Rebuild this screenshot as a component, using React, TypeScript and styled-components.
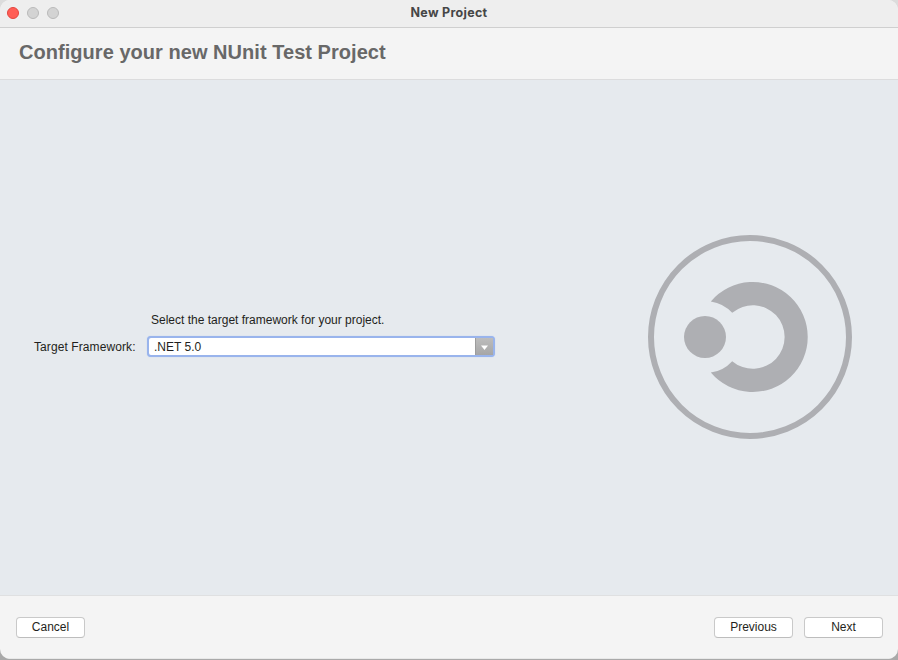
import React from "react";
import styled, { createGlobalStyle } from "styled-components";

const GlobalStyle = createGlobalStyle`
  *, *::before, *::after { box-sizing: border-box; }
  body {
    margin: 0;
    min-height: 100vh;
    background: linear-gradient(#dcdcdc 50%, #a9a9a9 50%);
    overflow: hidden;
  }
`;

const Window = styled.div`
  width: 898px;
  height: 659px;
  display: flex;
  flex-direction: column;
  border-radius: 10px;
  overflow: hidden;
  background: #f4f4f4;
  font-family: "Liberation Sans", Arial, sans-serif;
  font-size: 12px;
  color: #1f1f20;
`;

const TitleBar = styled.header`
  height: 28px;
  flex: none;
  display: grid;
  grid-template-columns: 1fr auto 1fr;
  align-items: center;
  padding: 0 7px 2px;
  background: #eeeeee;
  border-bottom: 1px solid #cfcfcf;
`;

const Lights = styled.div`
  display: flex;
  gap: 8px;
`;

const Light = styled.span<{ $fill: string; $edge: string }>`
  width: 12px;
  height: 12px;
  border-radius: 50%;
  background: ${(p) => p.$fill};
  border: 1px solid ${(p) => p.$edge};
`;

const Title = styled.div`
  font: 700 12.5px/16px Inter, sans-serif;
  letter-spacing: 0.3px;
  padding-top: 1px;
  color: #464646;
`;

const Banner = styled.div`
  height: 52px;
  flex: none;
  padding: 12px 19px;
  border-bottom: 1px solid #dcdcdd;
`;

const Heading = styled.h1`
  margin: 0;
  font-size: 20px;
  line-height: 24px;
  font-weight: 700;
  letter-spacing: 0.04px;
  color: #686868;
`;

const Content = styled.main`
  flex: 1;
  display: flex;
  justify-content: space-between;
  align-items: center;
  padding: 0 46px 2px 34px;
  background: #e6eaee;
`;

const Form = styled.div`
  display: grid;
  grid-template-columns: 113px 348px;
  row-gap: 8px;
  align-items: center;
  margin-bottom: 4px;
`;

const Hint = styled.div`
  grid-column: 2;
  padding-left: 4px;
  line-height: 16px;
`;

const Label = styled.label`
  line-height: 16px;
  letter-spacing: 0.09px;
`;

const Combo = styled.div`
  height: 21px;
  display: flex;
  border: 2px solid #99b4ec;
  border-radius: 4px;
  background: #fff;
  box-shadow: 0 0 1px #a9c0ef;
`;

const ComboValue = styled.div`
  flex: 1;
  padding-left: 5px;
  line-height: 18px;
`;

const ComboArrow = styled.div`
  width: 18px;
  display: flex;
  align-items: center;
  justify-content: center;
  padding-top: 2px;
  border-left: 1px solid #9c9c9c;
  background: linear-gradient(#bdbdbd, #a6a6a6);
`;

const Footer = styled.footer`
  height: 64px;
  flex: none;
  display: flex;
  gap: 11px;
  padding: 21px 15px 0 16px;
  border-top: 1px solid #dfe0e1;
  border-bottom: 1px solid #e8e8e8;
`;

const Button = styled.button<{ $width: number; $push?: boolean }>`
  width: ${(p) => p.$width}px;
  height: 21px;
  margin-left: ${(p) => (p.$push ? "auto" : "0")};
  padding: 0 0 1px;
  border: 1px solid #c9c9c9;
  border-bottom-color: #bdbdbd;
  border-radius: 4px;
  background: #fff;
  color: #1f1f20;
  font: inherit;
  line-height: 18px;
`;

const Emblem = () => (
  <svg width="204" height="204" viewBox="648 235 204 204" fill="#aeafb3">
    <circle cx="750" cy="337" r="99" fill="none" stroke="#aeafb3" strokeWidth="6" />
    <circle cx="705" cy="337" r="21" />
    <path d="M710.8 301.4A55 55 0 1 1 710.8 372.6A36 36 0 0 0 732.2 361.2A31.8 31.8 0 1 0 732.2 312.8A36 36 0 0 0 710.8 301.4Z" />
  </svg>
);

export default function App() {
  return (
    <>
      <GlobalStyle />
      <Window>
        <TitleBar>
          <Lights>
            <Light $fill="#ff5d55" $edge="#e3453e" />
            <Light $fill="#d3d3d3" $edge="#b9b9b9" />
            <Light $fill="#d3d3d3" $edge="#b9b9b9" />
          </Lights>
          <Title>New Project</Title>
        </TitleBar>
        <Banner>
          <Heading>Configure your new NUnit Test Project</Heading>
        </Banner>
        <Content>
          <Form>
            <Hint>Select the target framework for your project.</Hint>
            <Label>Target Framework:</Label>
            <Combo>
              <ComboValue>.NET 5.0</ComboValue>
              <ComboArrow>
                <svg width="7" height="5" viewBox="0 0 7 5">
                  <path d="M0 0.5H7L3.5 5Z" fill="#fff" />
                </svg>
              </ComboArrow>
            </Combo>
          </Form>
          <Emblem />
        </Content>
        <Footer>
          <Button $width={69}>Cancel</Button>
          <Button $width={79} $push>Previous</Button>
          <Button $width={79}>Next</Button>
        </Footer>
      </Window>
    </>
  );
}
